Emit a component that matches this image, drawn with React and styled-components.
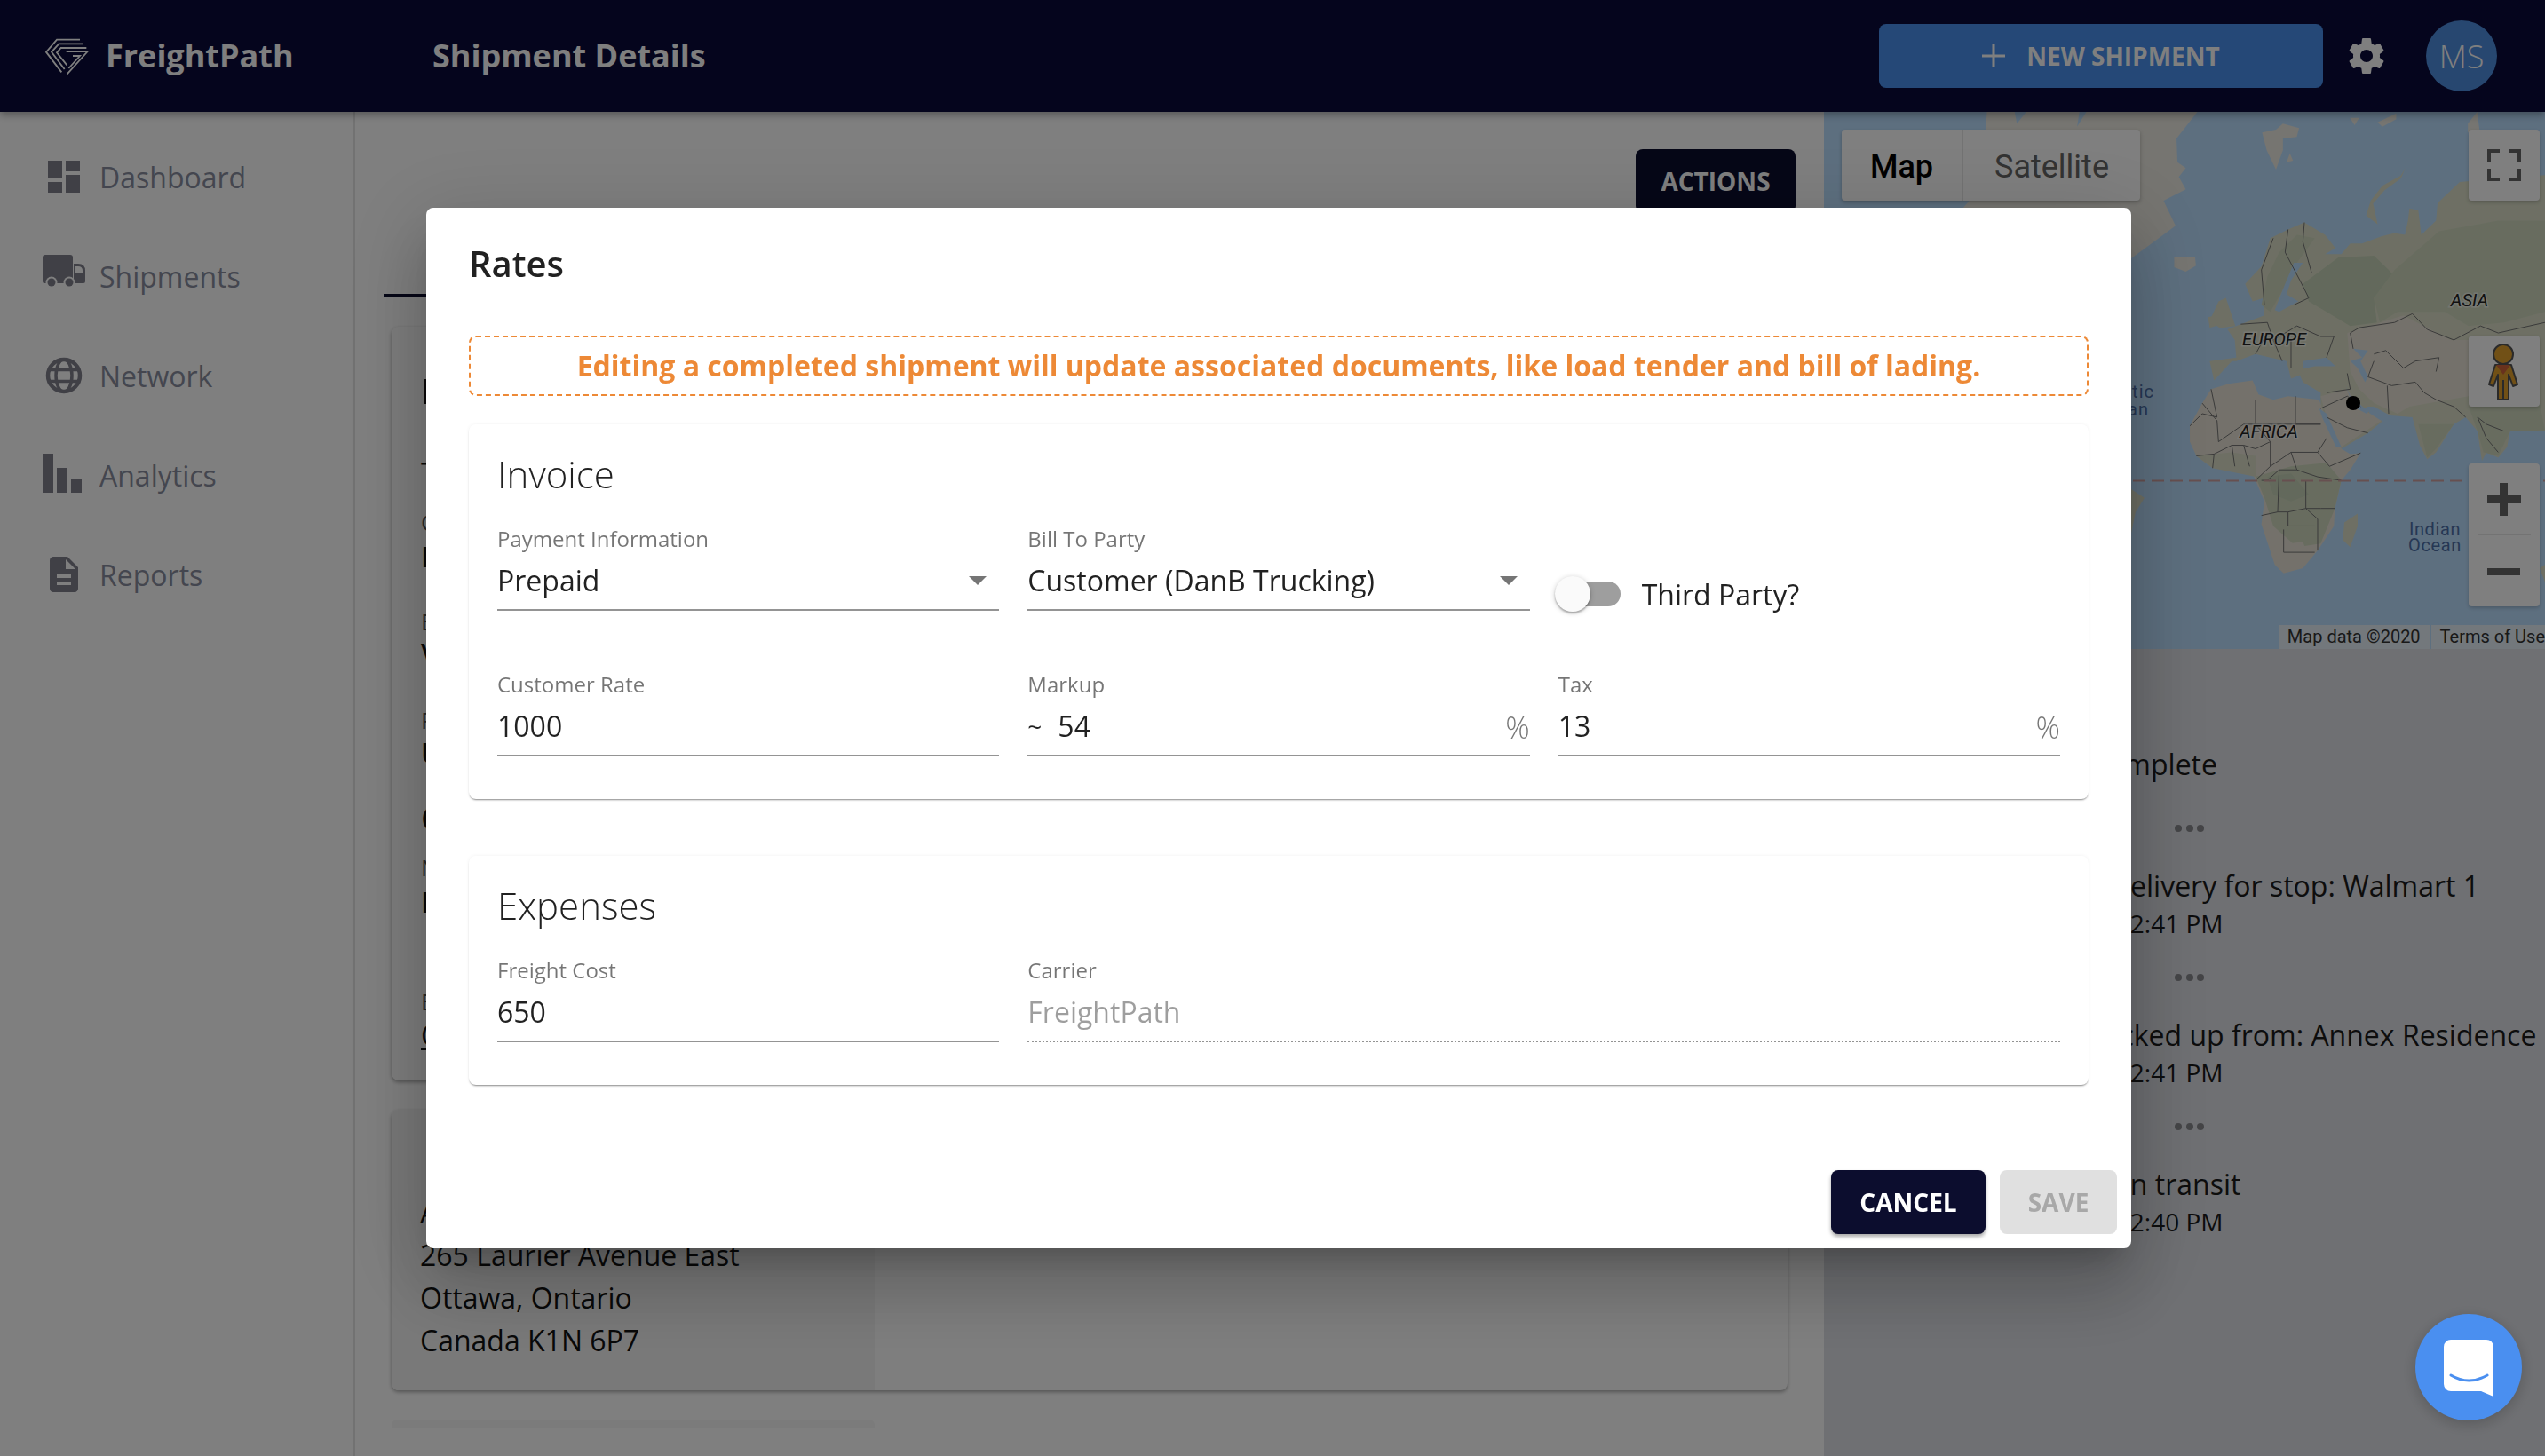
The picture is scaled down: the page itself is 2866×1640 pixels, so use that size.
import React from "react";
import styled, { createGlobalStyle } from "styled-components";

const Global = createGlobalStyle`
  html, body { margin: 0; padding: 0; height: 1640px; overflow: hidden; background: #fff; }
  body { font-family: "Open Sans", "Noto Sans", sans-serif; color: rgba(0,0,0,.87); }
  #root { height: 1640px; }
  * { box-sizing: border-box; }
`;

const NAVY = "#0a0b3a";

const Page = styled.div`display: flex; flex-direction: column; height: 1640px; overflow: hidden;`;
const Header = styled.header`
  position: relative; z-index: 2; flex: none; height: 126px; display: flex; align-items: center;
  padding: 0 54px 0 44px; background: ${NAVY}; color: #fff; box-shadow: 0 4px 8px rgba(0,0,0,.3);
`;
const Brand = styled.div`display: flex; align-items: center; gap: 11px; width: 443px; font-size: 36px; font-weight: 700; padding-bottom: 2px;`;
const PageTitle = styled.div`font-size: 36px; font-weight: 700; padding-bottom: 2px;`;
const HeaderRight = styled.div`margin-left: auto; display: flex; align-items: center;`;
const NewButton = styled.button`
  width: 500px; height: 72px; border: 0; border-radius: 8px; background: #4a90ee; color: #fff;
  font: 700 28px "Open Sans", sans-serif; display: flex; align-items: center; justify-content: center; gap: 24px;
`;
const GearWrap = styled.div`margin-left: 25px; width: 48px; height: 48px; color: #fff;`;
const Avatar = styled.div`
  margin-left: 43px; width: 80px; height: 80px; border-radius: 50%; background: #4f8fe0; color: #fff;
  font-size: 36px; font-weight: 300; display: flex; align-items: center; justify-content: center;
`;

const Body = styled.div`flex: 1; display: flex; min-height: 0;`;
const Sidebar = styled.nav`
  flex: none; width: 400px; padding: 17px 0 0 48px; border-right: 2px solid rgba(0,0,0,.1); background: #fff;
`;
const NavItem = styled.div`height: 112px; display: flex; align-items: center; gap: 16px; color: #888d9e; font-size: 32px;`;
const NavIcon = styled.svg`width: 48px; height: 48px; flex: none; fill: #80808c; stroke: none;`;

const Main = styled.main`flex: none; width: 1654px; padding: 42px 32px 0; background: #fff;`;
const ActionsRow = styled.div`display: flex; justify-content: flex-end; height: 72px;`;
const ActionsButton = styled.button`
  width: 180px; height: 72px; border: 0; border-radius: 8px; background: #0c0d2e; color: #fff;
  font: 700 28px "Open Sans", sans-serif;
`;
const TabIndicator = styled.div`margin-top: 91px; width: 280px; height: 4px; background: #0c0d2e;`;
const Cards = styled.div`padding: 33px 9px 0; display: flex; flex-direction: column; gap: 33px;`;
const Card = styled.section`
  background: #fdfdfd; border-radius: 8px; box-shadow: 0 2px 4px rgba(0,0,0,.35); overflow: hidden;
  flex: none; height: ${p => p.$h}px; display: flex;
`;
const CardBody = styled.div`padding: 54px 0 0 33px;`;
const Frag = styled.div`
  margin-top: ${p => p.$mt}px; height: 36px; line-height: 36px; white-space: nowrap;
  font-size: ${p => (p.$kind === "head" ? 40 : p.$kind === "label" ? 26 : 32)}px;
  font-weight: ${p => (p.$kind === "head" ? 700 : p.$kind === "value" ? 600 : 400)};
  color: ${p => (p.$kind === "label" ? "#555" : "#111")};
  text-decoration: ${p => (p.$link ? "underline" : "none")};
`;
const AddressCell = styled.div`
  width: 544px; background: #f3f3f3; padding: 92px 0 0 32px; font-size: 32px; line-height: 48px; color: #111;
`;
const Sliver = styled.div`flex: none; width: 544px; height: 9px; background: #f6f6f6; border-radius: 6px 6px 0 0;`;

const Right = styled.aside`flex: none; width: 812px; background: #dee0e6; position: relative;`;
const MapBox = styled.div`position: relative; height: 605px; overflow: hidden; background: #bbdfff;`;
const MapArt = styled.svg`display: block; width: 812px; height: 605px; font-family: Roboto, sans-serif;`;
const MapType = styled.div`
  position: absolute; left: 20px; top: 20px; height: 80px; display: flex; border-radius: 4px;
  background: #fff; box-shadow: 0 2px 4px rgba(0,0,0,.25); font: 400 36px Roboto, sans-serif;
`;
const MapTab = styled.div`
  width: ${p => p.$w}px; display: flex; align-items: center; justify-content: center; padding-top: 3px;
  color: ${p => (p.$on ? "#000" : "#666")}; font-weight: ${p => (p.$on ? 500 : 400)};
  border-right: ${p => (p.$on ? "2px solid #e6e6e6" : "0")};
`;
const MapControl = styled.div`
  position: absolute; left: 726px; top: ${p => p.$top}px; width: 80px; height: ${p => p.$h}px;
  background: #fff; border-radius: 4px; box-shadow: 0 2px 4px rgba(0,0,0,.2);
`;
const ControlIcon = styled.svg`display: block; width: 80px; height: 100%;`;
const Attribution = styled.div`
  position: absolute; right: 0; bottom: 0; height: 27px; display: flex; gap: 2px; font: 400 20px/27px Roboto, sans-serif; color: #333;
`;
const AttrItem = styled.span`
  background: rgba(245,245,245,.75); padding: 0 ${p => p.$r}px 0 ${p => p.$l}px; white-space: nowrap;
`;

const Timeline = styled.div`padding: 108px 0 0 159px; white-space: nowrap;`;
const EventTitle = styled.div`height: 44px; font-size: 32px; line-height: 44px; margin-left: ${p => p.$in || 0}px; color: #1a1a1a;`;
const EventTime = styled.div`height: 44px; font-size: 28px; line-height: 41px; margin-left: ${p => p.$in || 0}px; color: #1a1a1a;`;
const Dots = styled.div`display: flex; gap: 4.5px; padding: ${p => (p.$first ? 44 : 31)}px 0 0 236px; height: ${p => (p.$first ? 93 : 80)}px;`;
const Dot = styled.i`width: 8px; height: 8px; margin-top: 2px; border-radius: 50%; background: #8a8b8f;`;

const Backdrop = styled.div`
  position: fixed; inset: 0; z-index: 5; background: rgba(0,0,0,.5);
  display: flex; align-items: center; justify-content: center; padding-left: 14px;
`;
const Modal = styled.div`
  width: 1920px; height: 1172px; background: #fff; border-radius: 8px; display: flex; flex-direction: column;
  box-shadow: 0 22px 30px -14px rgba(0,0,0,.2), 0 48px 76px 6px rgba(0,0,0,.14), 0 18px 92px 16px rgba(0,0,0,.12);
`;
const ModalTitle = styled.h2`margin: 0; padding: 32px 48px 0; height: 96px; font-size: 40px; line-height: 62px; font-weight: 600; color: rgba(0,0,0,.87);`;
const ModalContent = styled.div`padding: 48px 48px 0; display: flex; flex-direction: column;`;
const Warning = styled.div`
  height: 68px; padding-bottom: 2px; border: 2px dashed #ed8936; border-radius: 8px; display: flex; align-items: center; justify-content: center;
  color: #ed8936; font-size: 32px; font-weight: 700;
`;
const Panel = styled.section`
  margin-top: ${p => p.$mt}px; background: #fff; border-radius: 8px; padding: 32px 32px 48px;
  box-shadow: 0 2px 2px -1px rgba(0,0,0,.45), 0 0 4px rgba(0,0,0,.06);
`;
const PanelTitle = styled.h3`margin: 0 0 34px; font-size: 42px; line-height: 48px; font-weight: 300; color: rgba(0,0,0,.87);`;
const FieldGrid = styled.div`display: grid; grid-template-columns: repeat(3, 1fr); column-gap: 32px; row-gap: 68px;`;
const Field = styled.div`grid-column: span ${p => p.$span || 1}; min-width: 0;`;
const Label = styled.div`height: 32px; font-size: 24px; line-height: 30px; color: rgba(0,0,0,.54);`;
const Control = styled.div`
  position: relative; height: 64px; display: flex; align-items: center; padding-bottom: 3px;
  font-size: 32px; color: ${p => (p.$disabled ? "rgba(0,0,0,.38)" : "rgba(0,0,0,.87)")};
  border-bottom: 2px ${p => (p.$disabled ? "dotted" : "solid")} rgba(0,0,0,.42);
`;
const Arrow = styled.i`
  margin-left: auto; margin-right: 14px; width: 0; height: 0;
  border-left: 10px solid transparent; border-right: 10px solid transparent; border-top: 10px solid rgba(0,0,0,.54);
`;
const Tilde = styled.span`font-size: 28px; margin-right: 18px;`;
const Percent = styled.span`margin-left: auto; color: rgba(0,0,0,.54); font-size: 34px; font-weight: 300; padding-top: 2px;`;
const SwitchCell = styled.div`height: 96px; padding: 58px 0 0 2px; display: flex; align-items: center; font-size: 32px;`;
const Track = styled.span`position: relative; flex: none; width: 68px; height: 28px; border-radius: 14px; background: #9e9e9e; margin-right: 24px;`;
const Thumb = styled.span`
  position: absolute; left: -6px; top: -6px; width: 40px; height: 40px; border-radius: 50%; background: #fafafa;
  box-shadow: 0 2px 2px rgba(0,0,0,.25), 0 1px 6px rgba(0,0,0,.2);
`;
const Actions = styled.div`margin-top: auto; padding: 16px; display: flex; justify-content: flex-end; gap: 16px;`;
const DialogButton = styled.button`
  height: 72px; width: ${p => p.$w}px; border: 0; border-radius: 8px; font: 700 28px "Open Sans", sans-serif;
  background: ${p => (p.$off ? "#e0e0e0" : "#0c0d2e")}; color: ${p => (p.$off ? "#a8a8a8" : "#fff")};
  box-shadow: ${p => (p.$off ? "none" : "0 3px 4px rgba(0,0,0,.35)")};
`;

const Chat = styled.div`
  position: fixed; z-index: 6; left: 2720px; top: 1480px; width: 120px; height: 120px; border-radius: 50%;
  background: #4a8ff0; box-shadow: 0 4px 16px rgba(0,0,0,.2); display: flex; align-items: center; justify-content: center;
`;
const ChatIcon = styled.svg`width: 56px; height: 64px; margin-top: 2px;`;

const Logo = () => (
  <svg width="64" height="56" viewBox="0 0 192 168" fill="none" stroke="#fff" strokeWidth="5.5" strokeLinejoin="miter" style={{ flex: "none" }}>
    <path d="M138 32H60L24 74l52 68" />
    <path d="M150 46H67L42 74l44 58" />
    <path d="M160 60H74L60 76l34 42" />
    <path d="M92 72h72L95 148" />
    <path d="M114 87h24l-38 42" />
  </svg>
);

const GEAR = "M19.43 12.98c.04-.32.07-.64.07-.98s-.03-.66-.07-.98l2.11-1.65c.19-.15.24-.42.12-.64l-2-3.46c-.12-.22-.39-.3-.61-.22l-2.49 1c-.52-.4-1.08-.73-1.69-.98l-.38-2.65C14.46 2.18 14.25 2 14 2h-4c-.25 0-.46.18-.49.42l-.38 2.65c-.61.25-1.17.59-1.69.98l-2.49-1c-.23-.09-.49 0-.61.22l-2 3.46c-.13.22-.07.49.12.64l2.11 1.65c-.04.32-.07.65-.07.98s.03.66.07.98l-2.11 1.65c-.19.15-.24.42-.12.64l2 3.46c.12.22.39.3.61.22l2.49-1c.52.4 1.08.73 1.69.98l.38 2.65c.03.24.24.42.49.42h4c.25 0 .46-.18.49-.42l.38-2.65c.61-.25 1.17-.59 1.69-.98l2.49 1c.23.09.49 0 .61-.22l2-3.46c.12-.22.07-.49-.12-.64l-2.11-1.65zM12 15.5c-1.93 0-3.5-1.57-3.5-3.5s1.57-3.5 3.5-3.5 3.5 1.57 3.5 3.5-1.57 3.5-3.5 3.5z";

const navIcons = {
  dashboard: (
    <NavIcon viewBox="0 0 24 24"><path d="M3 13h8V3H3v10zm0 8h8v-6H3v6zm10 0h8V11h-8v10zm0-18v6h8V3h-8z" /></NavIcon>
  ),
  truck: (
    <NavIcon viewBox="0 0 48 48">
      <path d="M3 0h28a3 3 0 0 1 3 3v29H2a2 2 0 0 1-2-2V3a3 3 0 0 1 3-3z" />
      <path d="M35 10h5q8 0 8 8v12a2 2 0 0 1-2 2H35z" />
      <path d="M37 13h3q5 0 5 5v3h-8z" fill="#fff" />
      <circle cx="10" cy="31" r="6.5" fill="#fff" /><circle cx="10" cy="31" r="4.5" />
      <circle cx="30" cy="31" r="6.5" fill="#fff" /><circle cx="30" cy="31" r="4.5" />
    </NavIcon>
  ),
  globe: (
    <NavIcon viewBox="0 0 48 48">
      <g fill="none" stroke="#80808c">
        <circle cx="24" cy="24" r="18" strokeWidth="4.5" />
        <ellipse cx="24" cy="24" rx="9" ry="18" strokeWidth="3.5" />
        <path d="M7 17.5h34M7 30.5h34" strokeWidth="3.5" />
      </g>
    </NavIcon>
  ),
  bars: (
    <NavIcon viewBox="0 0 48 48"><path d="M0 0h12v44H0zM16 16h12v28H16zM32 28h12v16H32z" /></NavIcon>
  ),
  doc: (
    <NavIcon viewBox="0 0 24 24"><path d="M14 2H6c-1.1 0-1.99.9-1.99 2L4 20c0 1.1.89 2 1.99 2H18c1.1 0 2-.9 2-2V8l-6-6zm2 16H8v-2h8v2zm0-4H8v-2h8v2zm-3-5V3.5L18.5 9H13z" /></NavIcon>
  ),
};

const NAV = [
  ["dashboard", "Dashboard"],
  ["truck", "Shipments"],
  ["globe", "Network"],
  ["bars", "Analytics"],
  ["doc", "Reports"],
];

const FRAGS = [
  ["Information", 0, "head"],
  ["Tender", 57, "text"],
  ["Customer", 19, "label"],
  ["FreightPath", 3, "value"],
  ["Equipment", 37, "label"],
  ["Van", 0, "value"],
  ["Pieces", 39, "label"],
  ["Units", 1, "value"],
  ["Contact", 37, "head"],
  ["Name", 20, "label"],
  ["Dan", 3, "value"],
  ["Email", 76, "label"],
  ["Quote", 2, "text", true],
];

const Z9 = "translate(326 4) scale(.33333 .39526)";
const Z12 = "translate(-4 0) scale(.52083 .33333)";

const poly = (fill, points, key) => <polygon key={key} fill={fill} points={points} />;

const LAND = "#dcdfc8";
const TAN = "#e8e3d6";
const GREEN = "#c6d3b8";
const MID = "#d0d9bf";
const ICE = "#eceae2";
const SEA = "#bbdfff";

const BORDERS = [
  "300,820 350,870 355,930 440,880 480,880 615,880 700,880",
  "330,780 350,860 300,850 258,885",
  "480,810 480,880 530,930 530,1000 480,1040",
  "615,800 615,880 700,880",
  "530,1000 600,960 690,960 720,920",
  "600,960 620,1010 690,1030 770,1040",
  "690,960 730,1000 835,962",
  "620,1010 560,1010 520,1040 500,1040",
  "280,970 340,965 400,940 440,940 480,950 530,930",
  "340,965 335,1005", "400,940 410,1000", "440,940 460,1000",
  "560,1010 555,1130 500,1140", "555,1130 590,1130 650,1120 700,1120 748,1120",
  "650,1040 650,1120 690,1150 690,1240", "590,1130 590,1170 680,1170",
  "575,1180 575,1245 680,1245",
  "540,350 500,440 510,540", "590,325 580,390 630,470 660,520 610,540",
  "645,305 640,360 670,450",
  "430,595 520,590 540,640 620,600 700,630 745,630 720,690",
  "480,680 520,620", "540,640 570,700", "600,640 600,720",
  "800,620 830,605 950,590 1010,565 1060,610 1150,640 1240,600 1300,620 1458,590",
  "810,665 800,620", "880,680 920,670 980,720 1020,700 1100,690 1090,730",
  "860,745 880,700", "925,770 930,850", "1020,760 1050,790 1090,810 1150,830 1190,860",
  "1020,760 940,770 860,745", "790,735 800,780 720,790",
  "700,835 790,800 835,830", "720,860 790,890 860,905",
  "1230,860 1260,920 1300,960", "1320,900 1260,880 1230,860",
];

const MapDrawing = () => (
  <MapArt viewBox="0 0 812 605">
    <rect width="812" height="605" fill={SEA} />
    <g transform={Z12}>
      {poly(ICE, "360,0 815,0 770,90 772,170 790,190 775,220 790,262 742,300 768,385 720,440 672,495 500,495 420,350 300,340 350,250", "g")}
      {poly(ICE, "955,70 985,60 1000,40 1035,55 1030,85 1000,90 1000,130 985,195 965,130", "s1")}
      {poly(ICE, "1015,140 1022,165 1008,170", "s2")}
      {poly(LAND, "1265,190 1255,215 1215,250 1190,300 1180,350 1205,380 1195,310 1220,265 1255,225", "nz")}
      {poly(ICE, "765,490 810,490 812,520 790,540 765,525", "ic")}
      {poly(ICE, "1145,20 1165,20 1155,45", "i1")}
      {poly(ICE, "1205,35 1245,5 1245,25 1215,50", "i2")}
      {poly(ICE, "1400,40 1420,0 1425,60 1400,70", "i3")}
      {poly(SEA, "420,0 445,0 425,40", "w1")}
      {poly(SEA, "560,0 575,0 555,50", "w2")}
    </g>
    <g transform={Z9}>
      {poly(LAND, "445,480 500,430 530,350 590,325 645,305 715,340 750,378 715,395 770,395 800,365 840,365 905,345 950,335 985,340 995,300 1000,265 1030,270 1040,340 1090,300 1095,250 1170,190 1300,180 1458,170 1458,900 1420,880 1380,880 1340,900 1330,945 1300,975 1260,960 1245,985 1230,900 1190,860 1150,880 1090,960 1060,980 1035,940 1010,860 935,855 880,830 855,830 875,865 910,870 860,905 770,950 745,900 700,835 700,790 640,760 630,740 600,750 585,700 530,690 480,680 415,700 400,700 340,755 325,700 415,690 410,640 385,610 430,595 510,570 510,520 470,530", "eu")}
      {poly(LAND, "325,585 355,530 380,520 412,600 360,606", "uk")}
      {poly(LAND, "320,575 345,570 345,600 325,605", "ie")}
      {poly(GREEN, "640,480 760,405 880,400 930,440 960,470 880,520 890,590 800,600 720,560 660,530", "ru")}
      {poly(MID, "950,440 1100,330 1300,300 1458,300 1458,560 1320,590 1200,600 1120,560 960,560 900,590 880,520", "si")}
      {poly(MID, "500,540 520,460 560,390 620,340 680,350 620,420 570,500 530,560", "sc")}
      {poly(TAN, "790,620 980,570 1140,640 1230,640 1200,800 1000,830 960,850 880,820 830,780 800,730", "ca")}
      {poly(TAN, "700,800 790,780 830,830 905,870 770,945 720,860", "ar")}
      {poly(MID, "1200,830 1440,820 1458,900 1340,900 1300,970 1250,960 1230,900", "ch")}
      {poly(MID, "1030,880 1150,880 1090,950 1060,975", "in")}
      {poly(TAN, "258,885 300,820 330,780 390,765 470,755 490,795 540,810 590,800 695,810 720,870 770,950 800,965 835,962 800,1010 770,1040 748,1120 745,1170 690,1240 640,1290 575,1305 545,1280 500,1165 510,1100 480,1040 460,1000 335,1005 280,970 258,930", "af")}
      {poly(MID, "480,1030 600,1000 720,990 770,1040 748,1120 700,1220 620,1230 540,1170 510,1090", "af2")}
      {poly(GREEN, "520,1030 600,1020 660,1080 600,1100 540,1080", "af3")}
      {poly(LAND, "280,970 400,960 480,970 480,1030 335,1005", "af4")}
      {poly(TAN, "545,1225 640,1215 660,1260 610,1295 560,1295", "af5")}
      {poly(LAND, "825,1135 825,1170 800,1230 775,1210 780,1160", "mg")}
      {poly(LAND, "60,1065 105,1090 75,1130 60,1190", "sa")}
      {poly(LAND, "1440,1290 1458,1280 1458,1330", "au")}
      {poly(SEA, "640,700 720,690 750,715 680,715 640,722", "bs")}
      {poly(SEA, "810,665 860,670 835,700 860,745 850,760 825,720 800,700 840,690", "cs")}
      {poly(SEA, "695,835 720,850 770,945 752,945 705,860", "rs")}
      {poly(SEA, "785,770 800,800 850,835 880,830 855,850 810,830", "pg")}
      {poly(SEA, "545,555 580,480 610,420 640,420 600,470 585,510 625,530 560,560", "bl")}
      <g fill="none" stroke="#747474" strokeWidth="1">
        {BORDERS.map(b => <polyline key={b} points={b} vectorEffect="non-scaling-stroke" />)}
      </g>
      <line x1="-60" y1="1041" x2="1458" y2="1041" stroke="#cfa0a0" strokeWidth="2" strokeDasharray="14 7" vectorEffect="non-scaling-stroke" />
    </g>
    <g fontStyle="italic" fontSize="20" fill="#222" stroke="rgba(255,255,255,.55)" strokeWidth="3" paintOrder="stroke" textAnchor="middle">
      <text x="507" y="263">EUROPE</text>
      <text x="501" y="367">AFRICA</text>
      <text x="727" y="219">ASIA</text>
    </g>
    <g fontSize="20" fill="#4c6fa8" letterSpacing="1" textAnchor="end">
      <text x="372" y="322">Atlantic</text>
      <text x="366" y="342">Ocean</text>
    </g>
    <g fontSize="20" fill="#4c6fa8" letterSpacing=".6" textAnchor="middle">
      <text x="688" y="477">Indian</text>
      <text x="688" y="495">Ocean</text>
    </g>
    <circle cx="596" cy="328" r="8" fill="#000" />
  </MapArt>
);

const Pegman = () => (
  <ControlIcon viewBox="0 0 80 80">
    <g fill="#e2a02c" stroke="#555" strokeWidth="2" strokeLinejoin="round">
      <circle cx="39" cy="21" r="11" />
      <path d="M30 33h18l7 22-5 2-5-13v28H33V44l-5 13-5-2z" />
      <path d="M39 50v22" fill="none" />
    </g>
    <path d="M31 33h16l-8 11z" fill="#d0643a" />
  </ControlIcon>
);

export default function App() {
  return (
    <>
      <Global />
      <Page>
        <Header>
          <Brand><Logo />FreightPath</Brand>
          <PageTitle>Shipment Details</PageTitle>
          <HeaderRight>
            <NewButton>
              <svg width="26" height="26" viewBox="0 0 26 26" stroke="#fff" strokeWidth="3"><path d="M13 0v26M0 13h26" /></svg>
              NEW SHIPMENT
            </NewButton>
            <GearWrap>
              <svg width="48" height="48" viewBox="0 0 24 24" fill="currentColor"><path d={GEAR} /></svg>
            </GearWrap>
            <Avatar>MS</Avatar>
          </HeaderRight>
        </Header>
        <Body>
          <Sidebar>
            {NAV.map(([icon, label]) => (
              <NavItem key={label}>{navIcons[icon]}{label}</NavItem>
            ))}
          </Sidebar>
          <Main>
            <ActionsRow><ActionsButton>ACTIONS</ActionsButton></ActionsRow>
            <TabIndicator />
            <Cards>
              <Card $h={849}>
                <CardBody>
                  {FRAGS.map(([t, mt, kind, link]) => (
                    <Frag key={t} $mt={mt} $kind={kind} $link={link}>{t}</Frag>
                  ))}
                </CardBody>
              </Card>
              <Card $h={316}>
                <AddressCell>
                  <div>Annex Residence</div>
                  <div>265 Laurier Avenue East</div>
                  <div>Ottawa, Ontario</div>
                  <div>Canada K1N 6P7</div>
                </AddressCell>
              </Card>
              <Sliver />
            </Cards>
          </Main>
          <Right>
            <MapBox>
              <MapDrawing />
              <MapType>
                <MapTab $on $w={137}>Map</MapTab>
                <MapTab $w={199}>Satellite</MapTab>
              </MapType>
              <MapControl $top={20} $h={80}>
                <ControlIcon viewBox="0 0 80 80">
                  <path d="M21 22h14v4H25v10h-4zM59 22H45v4h10v10h4zM21 58h14v-4H25V44h-4zM59 58H45v-4h10V44h4z" fill="#666" />
                </ControlIcon>
              </MapControl>
              <MapControl $top={252} $h={80}><Pegman /></MapControl>
              <MapControl $top={396} $h={161}>
                <ControlIcon viewBox="0 0 80 161">
                  <path d="M21 36h14V22h9v14h15v9H44v14h-9V45H21z" fill="#666" />
                  <rect x="10" y="79" width="60" height="2" fill="#e6e6e6" />
                  <rect x="21" y="118" width="37" height="8" fill="#666" />
                </ControlIcon>
              </MapControl>
              <Attribution>
                <AttrItem $l={10} $r={10}>Map data ©2020</AttrItem>
                <AttrItem $l={10} $r={0}>Terms of Use</AttrItem>
              </Attribution>
            </MapBox>
            <Timeline>
              <EventTitle $in={-7}>Shipment complete</EventTitle>
              <Dots $first><Dot /><Dot /><Dot /></Dots>
              <EventTitle>Confirmed delivery for stop: Walmart 1</EventTitle>
              <EventTime $in={83}>Jan 29 12:41 PM</EventTime>
              <Dots><Dot /><Dot /><Dot /></Dots>
              <EventTitle $in={-5}>Shipment picked up from: Annex Residence</EventTitle>
              <EventTime $in={83}>Jan 29 12:41 PM</EventTime>
              <Dots><Dot /><Dot /><Dot /></Dots>
              <EventTitle $in={26}>Shipment in transit</EventTitle>
              <EventTime $in={83}>Jan 29 12:40 PM</EventTime>
            </Timeline>
          </Right>
        </Body>
      </Page>
      <Backdrop>
        <Modal>
          <ModalTitle>Rates</ModalTitle>
          <ModalContent>
            <Warning>Editing a completed shipment will update associated documents, like load tender and bill of lading.</Warning>
            <Panel $mt={32}>
              <PanelTitle>Invoice</PanelTitle>
              <FieldGrid>
                <Field>
                  <Label>Payment Information</Label>
                  <Control>Prepaid<Arrow /></Control>
                </Field>
                <Field>
                  <Label>Bill To Party</Label>
                  <Control>Customer (DanB Trucking)<Arrow /></Control>
                </Field>
                <SwitchCell>
                  <Track><Thumb /></Track>
                  Third Party?
                </SwitchCell>
                <Field>
                  <Label>Customer Rate</Label>
                  <Control>1000</Control>
                </Field>
                <Field>
                  <Label>Markup</Label>
                  <Control><Tilde>~</Tilde>54<Percent>%</Percent></Control>
                </Field>
                <Field>
                  <Label>Tax</Label>
                  <Control>13<Percent>%</Percent></Control>
                </Field>
              </FieldGrid>
            </Panel>
            <Panel $mt={64}>
              <PanelTitle>Expenses</PanelTitle>
              <FieldGrid>
                <Field>
                  <Label>Freight Cost</Label>
                  <Control>650</Control>
                </Field>
                <Field $span={2}>
                  <Label>Carrier</Label>
                  <Control $disabled>FreightPath</Control>
                </Field>
              </FieldGrid>
            </Panel>
          </ModalContent>
          <Actions>
            <DialogButton $w={174}>CANCEL</DialogButton>
            <DialogButton $w={132} $off>SAVE</DialogButton>
          </Actions>
        </Modal>
      </Backdrop>
      <Chat>
        <ChatIcon viewBox="0 0 56 64">
          <path d="M8 0h40a8 8 0 0 1 8 8v56l-14-6H8a8 8 0 0 1-8-8V8a8 8 0 0 1 8-8z" fill="#fff" />
          <path d="M8 40q20 12 41 0" fill="none" stroke="#4a8ff0" strokeWidth="3" strokeLinecap="round" />
        </ChatIcon>
      </Chat>
    </>
  );
}
